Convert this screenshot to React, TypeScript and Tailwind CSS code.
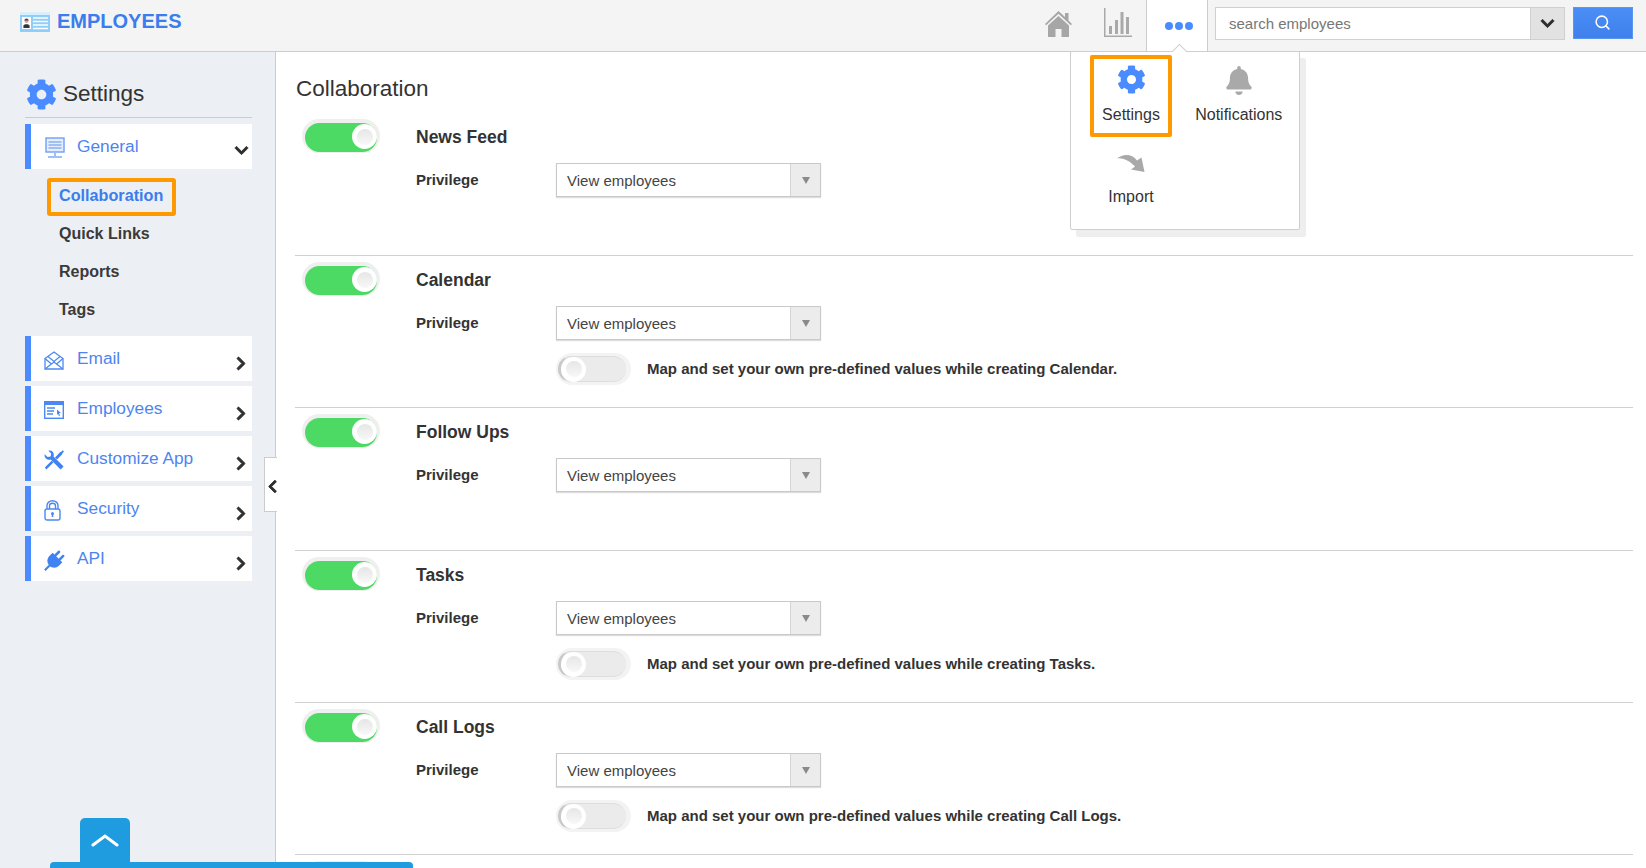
import { FaBell, FaChevronDown, FaChevronLeft, FaChevronRight, FaCog } from "react-icons/fa";
import { Search } from "lucide-react";

const sideItems = [
  { label: "Email", icon: <EmailIcon /> },
  { label: "Employees", icon: <WindowIcon /> },
  { label: "Customize App", icon: <ToolsIcon /> },
  { label: "Security", icon: <LockIcon /> },
  { label: "API", icon: <PlugIcon /> },
];

const sections = [
  { name: "News Feed", h: "h-[143px]" },
  { name: "Calendar", h: "h-[152px]", map: "Calendar" },
  { name: "Follow Ups", h: "h-[143px]" },
  { name: "Tasks", h: "h-[152px]", map: "Tasks" },
  { name: "Call Logs", h: "h-[152px]", map: "Call Logs" },
];

function LogoIcon() {
  return (
    <svg viewBox="0 0 30 20" className="w-[30px] h-[20px]">
      <rect x="0" y="0" width="30" height="20" fill="#8fcdfb" />
      <rect x="0" y="0" width="30" height="3" fill="#d8effd" />
      <rect x="2" y="5" width="9" height="12" fill="#ffffff" />
      <circle cx="6.5" cy="9" r="2" fill="#d8a58e" />
      <path d="M6.5 6.6a2.2 2.2 0 0 1 2.2 2H4.3a2.2 2.2 0 0 1 2.2-2z" fill="#6b3d2b" />
      <path d="M3.4 16v-2.2c0-1 1.3-1.6 3.1-1.6s3.1.6 3.1 1.6V16z" fill="#2f3640" />
      <path d="M13 6h15M13 9.5h15M13 13h15M13 16.5h15" stroke="#ffffff" strokeWidth="1.6" />
    </svg>
  );
}

function MonitorIcon() {
  return (
    <svg viewBox="0 0 20 22" className="w-[20px] h-[22px]" fill="none">
      <rect x="1" y="1" width="18" height="14" fill="#e4eefe" stroke="#6f9ff5" strokeWidth="1.4" />
      <path d="M3.5 5h13M3.5 8h13M3.5 11h13" stroke="#5f8fe8" strokeWidth="1.2" />
      <path d="M10 15v4" stroke="#9cc0f8" strokeWidth="2" />
      <path d="M3 20h14" stroke="#9cc0f8" strokeWidth="2" />
    </svg>
  );
}

function EmailIcon() {
  return (
    <svg viewBox="0 0 20 19" className="w-[20px] h-[19px]" fill="none" stroke="#4d88f2" strokeWidth="1.3">
      <path d="M1 7.5 10 1l9 6.5V18H1z" />
      <path d="M1 7.5l6.5 5.5M19 7.5 12.5 13M1 18l9-7 9 7" />
      <path d="M4 5.5l6 5 6-5" />
    </svg>
  );
}

function WindowIcon() {
  return (
    <svg viewBox="0 0 20 18" className="w-[20px] h-[18px]" fill="none">
      <rect x="0.7" y="0.7" width="18.6" height="16.6" stroke="#4d88f2" strokeWidth="1.4" />
      <rect x="0.7" y="0.7" width="18.6" height="3.3" fill="#4d88f2" />
      <path d="M3 7h8M3 10h7M3 13h6" stroke="#4d88f2" strokeWidth="1.3" />
      <path d="M13 8.5l4 3.5-2 .3 1 2.5-1 .4-1-2.5-1 1.3z" fill="#4d88f2" />
    </svg>
  );
}

function ToolsIcon() {
  return (
    <svg viewBox="0 0 20 20" className="w-[20px] h-[20px]" fill="#3f83f2">
      <path d="M.6 4.2 3.6 7 6.6 6.4 7.2 3.6 4.4.8C7.4-.2 10 1.8 9.8 5c0 .7-.1 1.1-.3 1.5L19.6 16.4 16.6 19.6 6.6 9.6C3.4 10.6 0 8 .6 4.2z" />
      <path d="M7.6 10.8.8 17.6l1.6 1.8L9.4 12.6zM11 7.4l5-5.2 1.2-.4L18.8.2 20 1.4l-1.6 1.8-.4 1.2-5 5z" />
    </svg>
  );
}

function LockIcon() {
  return (
    <svg viewBox="0 0 17 21" className="w-[17px] h-[21px]" fill="none" stroke="#4d88f2" strokeWidth="1.4">
      <path d="M3 9V5.5a5.5 4.8 0 0 1 11 0V9" />
      <path d="M5.5 9V5.8a3 2.6 0 0 1 6 0V9" />
      <rect x="1" y="9" width="15" height="11" rx="2" />
      <circle cx="8.5" cy="13.5" r="1.5" fill="#4d88f2" stroke="none" />
      <path d="M8.5 14v3" strokeWidth="1.6" />
    </svg>
  );
}

function PlugIcon() {
  return (
    <svg viewBox="0 0 20 20" className="w-[21px] h-[21px]" fill="#3f83f2">
      <g transform="rotate(45 10 10)">
        <rect x="6" y="0" width="2.4" height="7" rx="1" />
        <rect x="11.6" y="0" width="2.4" height="7" rx="1" />
        <path d="M3.5 6h13v4.500a6.500 6.500 0 0 1-13 0z" />
        <rect x="9" y="15" width="2" height="8" />
      </g>
    </svg>
  );
}

function HomeIcon() {
  return (
    <svg viewBox="0 0 27 26" className="w-[27px] h-[26px]" fill="#a6a6a6">
      <path d="M13.5 0 20 6V2h3.500v7.500L27 13l-1.200 1.300L13.5 2.800 1.200 14.300 0 13z" />
      <path d="M13.5 5 24 14.500V26h-7.500v-8h-6v8H3V14.500z" />
    </svg>
  );
}

function ChartIcon() {
  return (
    <svg viewBox="0 0 28 29" className="w-[28px] h-[29px]" fill="#a9a9a9">
      <rect x="0" y="0" width="1.5" height="29" />
      <rect x="0" y="27.5" width="28" height="1.5" />
      <rect x="5" y="18" width="3" height="8" />
      <rect x="11" y="12" width="3" height="14" />
      <rect x="16.5" y="4" width="3" height="22" />
      <rect x="22" y="9" width="3" height="17" />
    </svg>
  );
}

function ImportIcon() {
  return (
    <svg viewBox="0 0 28 18" className="w-[28px] h-[18px]" fill="#a9a9a9">
      <path d="M0 4.500C6-.5 15-.5 20 6.500L24.500 3.500 27.500 18 14 15.500 18 12.500C13 7.500 7 3.500 0 4.500z" />
    </svg>
  );
}

function Toggle({ on }: { on: boolean }) {
  if (on) {
    return (
      <div className="w-[78px] h-[34px] rounded-full bg-[#efefef] px-[3px] pt-[4px] pb-[1px]">
        <div className="h-full rounded-full bg-[#4cd964] flex justify-end pt-[1px]">
          <div className="w-[25px] h-[25px] rounded-full bg-white flex items-center justify-center">
            <div className="w-[16px] h-[16px] rounded-full bg-gradient-to-b from-[#e6e6e6] to-[#f8f8f8]" />
          </div>
        </div>
      </div>
    );
  }
  return (
    <div className="w-[75px] h-[32px] rounded-full bg-[#f3f3f3] pl-[2px] pr-[5px] py-[3px]">
      <div className="h-full rounded-full bg-[#ebebeb] border-l-[3px] border-y border-[#c9c9c9] border-y-[#dddddd] flex items-center justify-start">
        <div className="w-[25px] h-[25px] rounded-full bg-white flex items-center justify-center">
          <div className="w-[16px] h-[16px] rounded-full bg-gradient-to-b from-[#e6e6e6] to-[#f8f8f8]" />
        </div>
      </div>
    </div>
  );
}

function PrivilegeSelect() {
  return (
    <div className="w-[265px] h-[34px] border border-[#c9c9c9] shadow-[0_1px_1px_#ddd] flex items-center bg-white">
      <span className="flex-1 pl-[10px] pt-[2px] text-[15px] text-[#444]">View employees</span>
      <span className="w-[30px] h-full bg-[#ececec] border-l border-[#d5d5d5] flex items-center justify-center">
        <span className="w-0 h-0 border-x-[4px] border-x-transparent border-t-[7px] border-t-[#8a8a8a]" />
      </span>
    </div>
  );
}

function Section({ name, h, map }: { name: string; h: string; map?: string }) {
  return (
    <div className={`${h} border-b border-[#d0d0d0] pt-[6px] pl-[7px] flex`}>
      <div className="w-[114px] shrink-0">
        <Toggle on />
      </div>
      <div className="flex-1">
        <div className="h-[36px] flex items-center text-[17.5px] font-bold text-[#333]">{name}</div>
        <div className="flex items-start mt-[8px]">
          <div className="w-[140px] h-[34px] flex items-center text-[15px] font-bold text-[#333]">Privilege</div>
          <PrivilegeSelect />
        </div>
        {map && (
          <div className="flex items-center mt-[13px] ml-[140px]">
            <Toggle on={false} />
            <span className="ml-[16px] pt-[1px] text-[15px] font-bold text-[#333]">
              Map and set your own pre-defined values while creating {map}.
            </span>
          </div>
        )}
      </div>
    </div>
  );
}

export default function App() {
  return (
    <div className="relative w-full h-[868px] overflow-hidden bg-white font-['Liberation_Sans',Arial,sans-serif] text-[#333]">
      {/* top bar */}
      <header className="h-[52px] bg-[#f4f4f4] border-b border-[#cccccc] flex items-start">
        <div className="flex items-center h-[43px] pl-[20px] flex-1">
          <LogoIcon />
          <span className="ml-[7px] text-[20px] font-bold text-[#3b7ded] -mt-[1px]">EMPLOYEES</span>
        </div>
        <div className="mt-[11px] w-[27px] flex justify-center">
          <HomeIcon />
        </div>
        <div className="mt-[8px] ml-[32px]">
          <ChartIcon />
        </div>
        <div className="ml-[14px] w-[62px] h-[52px] bg-white border-x border-[#cccccc] flex items-start justify-center gap-[2px] pt-[22px] pl-[4px]">
          <span className="w-[8px] h-[8px] rounded-full bg-[#4a8cff]" />
          <span className="w-[8px] h-[8px] rounded-full bg-[#4a8cff]" />
          <span className="w-[8px] h-[8px] rounded-full bg-[#4a8cff]" />
        </div>
        <div className="ml-[7px] mt-[7px] w-[350px] h-[33px] border border-[#d0d0d0] bg-white flex items-center">
          <span className="flex-1 pl-[13px] pt-[1px] text-[15px] text-[#777]">search employees</span>
          <span className="w-[34px] h-full bg-[#e2e2e2] border-l border-[#d0d0d0] flex items-center justify-center">
            <FaChevronDown className="w-[15px] h-[15px] text-[#2f2f2f]" stroke="currentColor" strokeWidth={30} />
          </span>
        </div>
        <div className="ml-[8px] mt-[7px] w-[60px] h-[32px] bg-gradient-to-b from-[#4b8ef7] to-[#3f80ec] border border-[#5a95ee] flex items-center justify-center pb-[2px] pr-[1px]">
          <Search className="w-[17px] h-[17px] text-white" strokeWidth={2.2} />
        </div>
        <div className="w-[13px]" />
      </header>

      <div className="flex h-[816px]">
        {/* left menu */}
        <aside className="w-[276px] shrink-0 bg-[#eceff4] border-r border-[#cccccc] pl-[25px] pr-[23px]">
          <div className="h-[66px] border-b border-[#cccccc] flex items-center pt-[19px]">
            <FaCog className="w-[31px] h-[31px] ml-[1px] text-[#4a8cff]" />
            <span className="ml-[6px] text-[22.5px] text-[#333]">Settings</span>
          </div>
          <div className="mt-[6px] h-[45px] bg-white border-l-[6px] border-[#4a8cff] flex items-center relative">
            <span className="w-[46px] pl-[14px] mt-[2px] shrink-0">
              <MonitorIcon />
            </span>
            <span className="text-[17.3px] text-[#4d85f0]">General</span>
            <FaChevronDown className="absolute right-[3px] top-[19px] w-[15px] h-[15px] text-[#2f2f2f]" stroke="currentColor" strokeWidth={30} />
          </div>
          <div className="mt-[9px] ml-[22px] w-[129px] h-[38px] border-4 border-[#ff9900] rounded-[3px] flex items-center pl-[8px] pb-[3px] text-[16.2px] font-bold text-[#3b7ded]">
            Collaboration
          </div>
          <div className="-mt-[1px]">
            {["Quick Links", "Reports", "Tags"].map((t) => (
              <div key={t} className="h-[38px] flex items-center pl-[34px] text-[16px] font-bold text-[#3a3a3a]">
                {t}
              </div>
            ))}
          </div>
          <div className="mt-[7px] flex flex-col gap-[5px]">
            {sideItems.map((item) => (
              <div key={item.label} className="h-[45px] bg-white border-l-[6px] border-[#4a8cff] flex items-center relative">
                <span className="w-[46px] pl-[13px] mt-[3px] shrink-0 flex">{item.icon}</span>
                <span className="text-[17.3px] text-[#4d85f0]">{item.label}</span>
                <FaChevronRight className="absolute right-[4px] top-[20px] w-[14px] h-[15px] text-[#2f2f2f]" stroke="currentColor" strokeWidth={30} />
              </div>
            ))}
          </div>
        </aside>

        {/* settings list */}
        <main className="flex-1 pl-[19px] pr-[13px]">
          <h1 className="h-[61px] flex items-center pt-[12px] pl-[1px] text-[22.5px] font-normal text-[#333]">Collaboration</h1>
          {sections.map((s) => (
            <Section key={s.name} {...s} />
          ))}
          <div className="pt-[6px] pl-[7px]">
            <Toggle on />
          </div>
        </main>
      </div>

      {/* collapse tab */}
      <div className="absolute left-[264px] top-[457px] w-[13px] h-[55px] bg-white border border-r-0 border-[#cccccc] flex items-center justify-center pt-[4px]">
        <FaChevronLeft className="w-[13px] h-[15px] text-[#2f2f2f] ml-[3px]" stroke="currentColor" strokeWidth={30} />
      </div>

      {/* bottom chat widget */}
      <div className="absolute left-[50px] top-[818px] w-[363px] flex flex-col items-start">
        <div className="ml-[30px] w-[50px] h-[44px] bg-[#1f9bdf] rounded-t-[5px] flex items-center justify-center">
          <svg viewBox="0 0 28 14" className="w-[28px] h-[14px]" fill="none" stroke="#fff" strokeWidth="3" strokeLinecap="round">
            <path d="M2 12 14 3l12 9" />
          </svg>
        </div>
        <div className="w-full h-[10px] bg-[#1f9bdf] rounded-t-[4px]" />
      </div>

      {/* more menu popup */}
      <div className="absolute left-[1070px] top-[51px] w-[230px] h-[179px] bg-white border border-[#cfcfcf] rounded-[2px] shadow-[6px_7px_0_#eeeeee]">
        <div className="absolute -top-[6px] left-[103px] w-[11px] h-[11px] bg-white border-l border-t border-[#cfcfcf] rotate-45" />
        <div className="grid grid-cols-[1fr_1fr] relative pl-[19px] pr-[12px] pt-[3px]">
          <div className="w-[82px] h-[82px] border-4 border-[#ff9900] rounded-[2px] flex flex-col items-center pt-[6px]">
            <FaCog className="w-[29px] h-[29px] text-[#4a8cff]" />
            <span className="mt-[9px] text-[16px] text-[#333]">Settings</span>
          </div>
          <div className="flex flex-col items-center pt-[11px] pl-[2px] whitespace-nowrap">
            <FaBell className="w-[28px] h-[29px] text-[#a9a9a9]" />
            <span className="mt-[8px] text-[16px] text-[#333]">Notifications</span>
          </div>
          <div className="w-[82px] flex flex-col items-center pt-[17px]">
            <ImportIcon />
            <span className="mt-[13px] text-[16px] text-[#333]">Import</span>
          </div>
        </div>
      </div>
    </div>
  );
}
